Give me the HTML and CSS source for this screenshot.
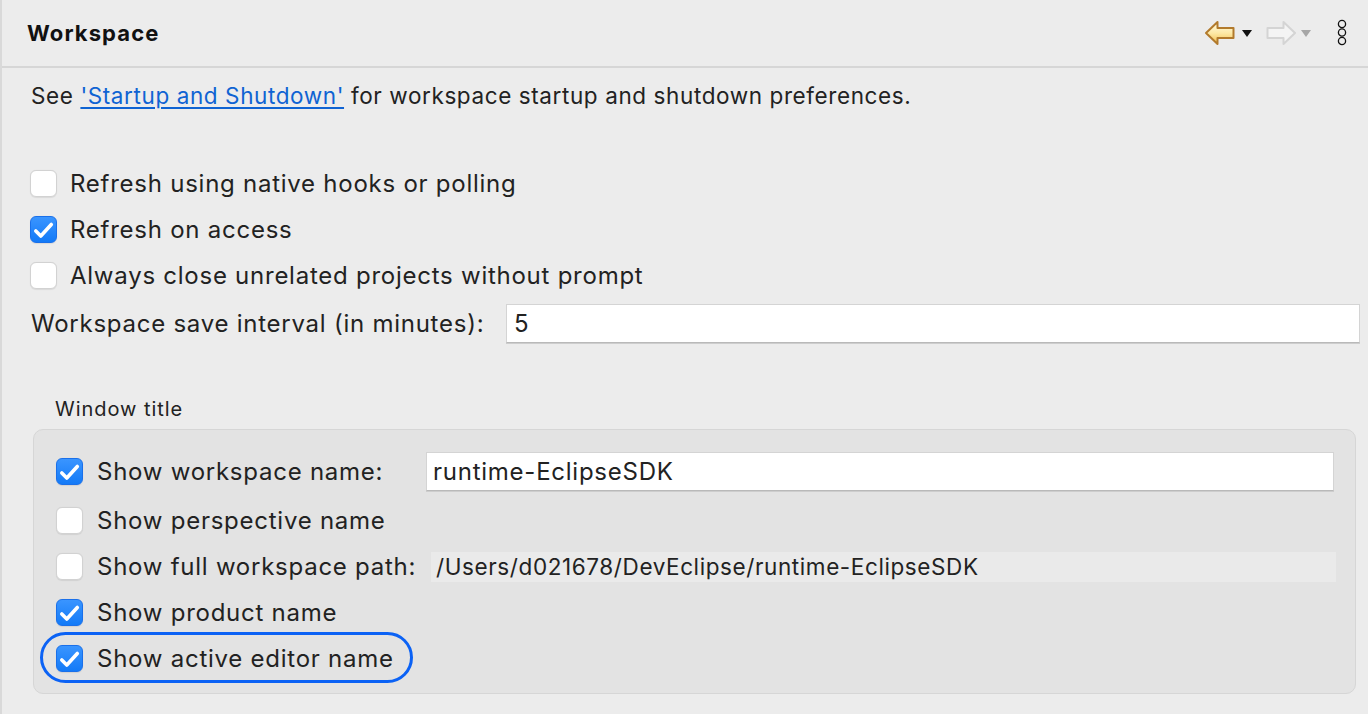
FILE: index.html
```html
<!DOCTYPE html>
<html>
<head>
<meta charset="utf-8">
<link rel="stylesheet" href="styles.css">
</head>
<body>
<div class="page">
  <header class="header">
    <h1 class="title">Workspace</h1>
    <div class="nav">
      <svg class="arrow" width="32" height="26" viewBox="0 0 32 26">
        <defs>
          <linearGradient id="gy" x1="0" y1="0" x2="0" y2="1">
            <stop offset="0" stop-color="#fffbe6"/>
            <stop offset="0.5" stop-color="#fde9a6"/>
            <stop offset="1" stop-color="#f2bf4e"/>
          </linearGradient>
        </defs>
        <path d="M2 13 L13.5 2 V8 H29.5 V18 H13.5 V24 Z" fill="url(#gy)" stroke="#b27a2c" stroke-width="2" stroke-linejoin="round"/>
      </svg>
      <svg class="tri" width="10" height="8" viewBox="0 0 10 8"><path d="M0 0 H10 L5 7 Z" fill="#111"/></svg>
      <svg class="arrow fwd" width="32" height="26" viewBox="0 0 32 26">
        <path d="M30 13 L18.5 2 V8 H2.5 V18 H18.5 V24 Z" fill="#f4f4f4" stroke="#d4d4d4" stroke-width="2" stroke-linejoin="round"/>
      </svg>
      <svg class="tri tri2" width="10" height="8" viewBox="0 0 10 8"><path d="M0 0 H10 L5 7 Z" fill="#a6a6a6"/></svg>
      <svg class="dots" width="12" height="28" viewBox="0 0 12 28">
        <circle cx="6" cy="5" r="3.6" fill="none" stroke="#111" stroke-width="1.3"/>
        <circle cx="6" cy="13.5" r="3.6" fill="none" stroke="#111" stroke-width="1.3"/>
        <circle cx="6" cy="22" r="3.6" fill="none" stroke="#111" stroke-width="1.3"/>
      </svg>
    </div>
  </header>

  <main class="content">
    <p class="intro">See <a href="#" class="link">'Startup and Shutdown'</a> for workspace startup and shutdown preferences.</p>

    <div class="checks">
      <label class="row"><span class="cb"></span><span>Refresh using native hooks or polling</span></label>
      <label class="row"><span class="cb on"><svg width="27" height="27" viewBox="0 0 27 27"><path d="M5.8 15 L10.8 20 L21.3 8.5" fill="none" stroke="#fff" stroke-width="3.6" stroke-linecap="round" stroke-linejoin="round"/></svg></span><span>Refresh on access</span></label>
      <label class="row"><span class="cb"></span><span>Always close unrelated projects without prompt</span></label>
    </div>

    <div class="interval">
      <span class="interval-label">Workspace save interval (in minutes):</span>
      <div class="field">5</div>
    </div>

    <div class="group-title">Window title</div>
    <section class="group">
      <div class="grow first">
        <label class="glabel wide"><span class="cb on"><svg width="27" height="27" viewBox="0 0 27 27"><path d="M5.8 15 L10.8 20 L21.3 8.5" fill="none" stroke="#fff" stroke-width="3.6" stroke-linecap="round" stroke-linejoin="round"/></svg></span><span>Show workspace name:</span></label>
        <div class="field gfield">runtime-EclipseSDK</div>
      </div>
      <div class="grow">
        <label class="glabel"><span class="cb"></span><span>Show perspective name</span></label>
      </div>
      <div class="grow">
        <label class="glabel wide2"><span class="cb"></span><span>Show full workspace path:</span></label>
        <div class="path">/Users/d021678/DevEclipse/runtime-EclipseSDK</div>
      </div>
      <div class="grow">
        <label class="glabel"><span class="cb on"><svg width="27" height="27" viewBox="0 0 27 27"><path d="M5.8 15 L10.8 20 L21.3 8.5" fill="none" stroke="#fff" stroke-width="3.6" stroke-linecap="round" stroke-linejoin="round"/></svg></span><span>Show product name</span></label>
      </div>
      <div class="grow">
        <label class="glabel focused"><span class="cb on"><svg width="27" height="27" viewBox="0 0 27 27"><path d="M5.8 15 L10.8 20 L21.3 8.5" fill="none" stroke="#fff" stroke-width="3.6" stroke-linecap="round" stroke-linejoin="round"/></svg></span><span>Show active editor name</span></label>
      </div>
    </section>
  </main>
</div>
</body>
</html>
```

FILE: styles.css
```css
* { box-sizing: border-box; }

html, body {
  margin: 0;
  padding: 0;
  background: #ececec;
}

body {
  font-family: Inter, "Open Sans", "Liberation Sans", sans-serif;
  color: #222;
  font-size: 24px;
  letter-spacing: 0.75px;
}

.page {
  width: 1368px;
  height: 714px;
  border-left: 2px solid #d9d9d9;
  overflow: hidden;
}

.header {
  height: 68px;
  border-bottom: 2px solid #d6d6d6;
  display: flex;
  align-items: center;
  padding-left: 25px;
  padding-right: 20px;
}

.title {
  margin: 0;
  font-size: 22px;
  font-weight: 700;
  letter-spacing: 1.1px;
  color: #111;
  flex: 1;
  padding-bottom: 1px;
}

.nav {
  display: flex;
  align-items: center;
  padding-bottom: 1px;
}

.arrow { display: block; }
.tri { display: block; margin-left: 6px; margin-top: 2px; }
.arrow.fwd { margin-left: 13px; }
.tri2 { margin-left: 4px; }
.dots { display: block; margin-left: 25px; margin-top: 1px; }

.content {
  padding-left: 29px;
  padding-right: 8px;
}

.intro {
  margin: 13px 0 0;
  line-height: 30px;
  height: 30px;
  font-size: 22.5px;
  letter-spacing: 0.6px;
}

.link {
  color: #0f63d3;
  text-decoration: underline;
  text-underline-offset: 3px;
  text-decoration-thickness: 1.5px;
}

.checks {
  margin-top: 49px;
  margin-left: -1px;
}

.row {
  display: flex;
  align-items: center;
  gap: 13px;
  height: 46px;
}

.cb {
  flex: 0 0 27px;
  width: 27px;
  height: 27px;
  border-radius: 6px;
  background: #fff;
  border: 1px solid #d2d2d2;
  box-shadow: 0 0.5px 1px rgba(0,0,0,0.08);
  display: block;
}

.cb svg { display: block; margin: -1px; }

.cb.on {
  background: linear-gradient(#3a95ff, #137af7);
  border-color: #1a70ea;
}

.interval {
  margin-top: 6px;
  height: 39px;
  display: flex;
  align-items: center;
}

.interval-label {
  flex: 0 0 475px;
}

.field {
  flex: 1;
  height: 39px;
  background: #fff;
  border: 1px solid #d4d4d4;
  border-bottom-color: #b9b9b9;
  box-shadow: 0 1px 0 #cdcdcd;
  padding-left: 7px;
  line-height: 37px;
}

.group-title {
  margin-top: 54px;
  padding-left: 24px;
  font-size: 20px;
  line-height: 24px;
  height: 24px;
  letter-spacing: 0.95px;
}

.group {
  margin: 8px 4px 0 2px;
  background: #e3e3e3;
  border: 1px solid #d6d6d6;
  border-radius: 10px;
  padding: 22px 21px 12px 22px;
}

.grow {
  display: flex;
  align-items: center;
  height: 46px;
}

.grow.first {
  height: 39px;
  margin-bottom: 6px;
}

.glabel {
  display: flex;
  align-items: center;
  gap: 14px;
  height: 30px;
}

.glabel.wide { flex: 0 0 370px; }
.glabel.wide2 { flex: 0 0 375px; }

.gfield {
  padding-left: 6px;
}

.path {
  flex: 1;
  height: 30px;
  line-height: 30px;
  background: #eaeaea;
  padding-left: 5px;
  margin-right: -2px;
  margin-top: 2px;
  font-size: 22.5px;
  letter-spacing: 0.6px;
}

.focused {
  position: relative;
}

.focused::after {
  content: "";
  position: absolute;
  left: -16px;
  right: -19px;
  top: -11px;
  bottom: -10px;
  border: 3px solid #0b62f5;
  border-radius: 26px;
}
```
